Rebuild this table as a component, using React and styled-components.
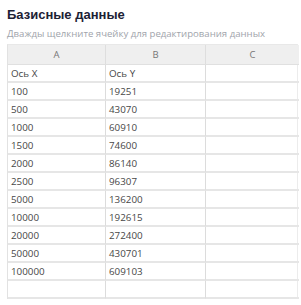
import React from "react";
import styled, { createGlobalStyle } from "styled-components";

const Global = createGlobalStyle`
  html, body { margin: 0; padding: 0; background: #fff; }
  body { font-family: "Open Sans", "Noto Sans", sans-serif; }
`;

const Page = styled.div`
  padding: 7px 3px 0 7px;
  width: 301px;
  box-sizing: border-box;
`;

const Title = styled.h1`
  margin: 0;
  font-family: "Liberation Sans", Arial, sans-serif;
  font-size: 13px;
  font-weight: 700;
  line-height: 16px;
  color: #1c2135;
`;

const Subtitle = styled.p`
  margin: 5px 0 4px;
  font-size: 9.6px;
  line-height: 12px;
  color: #a0a4ab;
  white-space: nowrap;
`;

const Grid = styled.div`
  display: grid;
  grid-template-columns: 98px 100px 93px;
  border-left: 1px solid #e2e2e2;
  border-right: 1px solid #ececec;
  border-top: 1px solid #e8e8e8;
`;

const HeadCell = styled.div`
  height: 20px;
  background: #efefef;
  color: #777;
  font-size: 9.5px;
  display: flex;
  align-items: center;
  justify-content: center;
  border-right: ${p => (p.$last ? "none" : "1px solid #dedede")};
  border-bottom: 1px solid #e0e0e0;
  box-sizing: border-box;
`;

const Cell = styled.div`
  height: 18px;
  box-sizing: border-box;
  padding: 0 0 0 3px;
  font-size: 9.8px;
  color: #474747;
  display: flex;
  align-items: center;
  border-right: ${p => (p.$last ? "none" : "1px solid #dcdcdc")};
  border-bottom: 2px solid #e6e6e6;
`;

const rows = [
  ["Ось X", "Ось Y"],
  ["100", "19251"],
  ["500", "43070"],
  ["1000", "60910"],
  ["1500", "74600"],
  ["2000", "86140"],
  ["2500", "96307"],
  ["5000", "136200"],
  ["10000", "192615"],
  ["20000", "272400"],
  ["50000", "430701"],
  ["100000", "609103"],
  ["", ""],
];

export default function App() {
  return (
    <Page>
      <Global />
      <Title>Базисные данные</Title>
      <Subtitle>Дважды щелкните ячейку для редактирования данных</Subtitle>
      <Grid>
        <HeadCell>A</HeadCell>
        <HeadCell>B</HeadCell>
        <HeadCell $last>C</HeadCell>
        {rows.map((r, i) => (
          <React.Fragment key={i}>
            <Cell>{r[0]}</Cell>
            <Cell>{r[1]}</Cell>
            <Cell $last />
          </React.Fragment>
        ))}
      </Grid>
    </Page>
  );
}
